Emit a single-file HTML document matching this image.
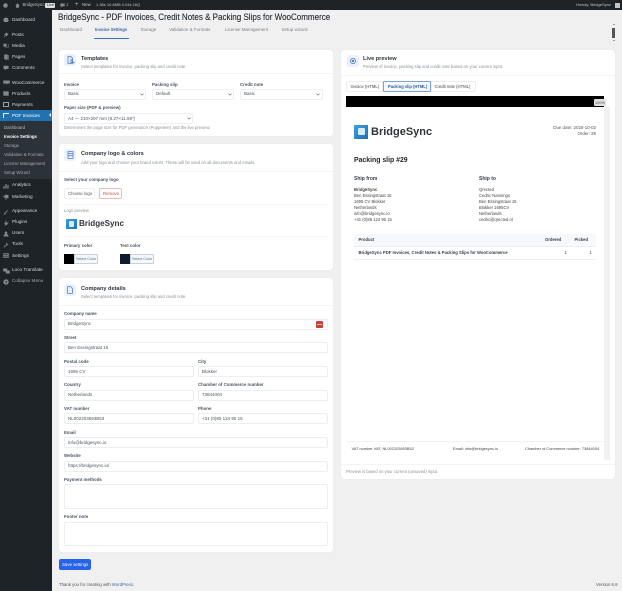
<!DOCTYPE html>
<html><head><meta charset="utf-8"><title>BridgeSync</title>
<style>
html,body{margin:0;padding:0}
body{width:622px;height:591px;overflow:hidden;background:#f0f0f1;position:relative;font-family:"Liberation Sans",sans-serif;color:#1f2937}
#w{position:absolute;left:0;top:0;width:622px;height:591px;filter:blur(.3px)}
.t,.b,svg.i{position:absolute}
.t{white-space:nowrap;line-height:10px;height:10px;font-size:4.6px}
.b{box-sizing:border-box}
.card{position:absolute;background:#fff;border-radius:4px;box-shadow:0 0 2px rgba(0,0,0,.04)}
.ln{position:absolute;height:1px;background:#f3f4f6}
.in{position:absolute;box-sizing:border-box;background:#fff;border:1px solid #eceef1;border-radius:2px}
.ic{position:absolute;width:12px;height:12px;background:#eaf1fb;border-radius:3px}
.l{font-weight:bold;color:#4b5563;font-size:4.4px}
.v{color:#4b5563;font-size:4.5px}
.g{color:#8a929c;font-size:4.2px}
.h{font-weight:bold;color:#2b3440;font-size:5.6px}
.m{color:#d5d8db;font-size:4.7px}
.c{color:#7b8087;font-size:4.5px}
.k{color:#444;font-size:4.2px}
.f{color:#444;font-size:3.9px}
svg.i path,svg.i rect,svg.i circle{fill:#82888d}
svg.o path,svg.o circle{fill:none!important}
</style></head><body><div id="w">

<!-- sidebar -->
<div class="b" style="left:0;top:0;width:52px;height:591px;background:#1d2327"></div>
<div class="b" style="left:0;top:110px;width:52px;height:11px;background:#2271b1"></div>
<div class="b" style="left:0;top:121px;width:52px;height:58px;background:#2c3338"></div>
<div class="b" style="left:49px;top:113px;width:0;height:0;border:2.5px solid transparent;border-right-color:#f0f0f1;border-left:0"></div>

<svg class="i" style="left:3px;top:17px" width="6" height="6" viewBox="0 0 6 6"><path d="M3 .5a2.6 2.6 0 0 1 2.6 2.6c0 .8-.3 1.4-.8 1.9H1.2C.7 4.500.4 3.900.4 3.100A2.600 2.600 0 0 1 3 .5z"/></svg><div class="t m" style="left:12px;top:15px">Dashboard</div>
<svg class="i" style="left:3px;top:32px" width="6" height="6" viewBox="0 0 6 6"><path d="M3.500.5l2 2-1 .5-.8 1.500L1 2.200 2.600 1.400zM1.800 3.500L.5 5.500l2-1.300z"/></svg><div class="t m" style="left:12px;top:29.5px">Posts</div>
<svg class="i" style="left:3px;top:43px" width="6" height="6" viewBox="0 0 6 6"><path d="M.4.8h3.200v2.800H.4zM2 3.900h3.600V1.600h-1v-.4h1.400v3.200H2z"/></svg><div class="t m" style="left:12px;top:40.5px">Media</div>
<svg class="i" style="left:3.500px;top:54px" width="5" height="6" viewBox="0 0 5 6"><path d="M.2.500h3.600v4.800H.2zM4.200 1h.6v4.600H1.200v-.3h3z"/></svg><div class="t m" style="left:12px;top:52px">Pages</div>
<svg class="i" style="left:3px;top:65px" width="6" height="6" viewBox="0 0 6 6"><path d="M.5.800h5v3.200H3.400L2 5.400V4H.5z"/></svg><div class="t m" style="left:12px;top:63px">Comments</div>
<svg class="i" style="left:2.500px;top:80px" width="7" height="5" viewBox="0 0 7 5"><path d="M.2.500h6.600v3H4.500L3.500 4.600 3 3.500H.2z"/></svg><div class="t m" style="left:12px;top:77.500px">WooCommerce</div>
<svg class="i" style="left:3px;top:91px" width="6" height="5" viewBox="0 0 6 5"><rect x=".3" y=".3" width="5.400" height="4.400"/></svg><div class="t m" style="left:12px;top:88.500px">Products</div>
<div class="b" style="left:2.500px;top:102px;width:6.500px;height:5px;border:1px solid #9aa0a5"></div><div class="t m" style="left:12px;top:99.500px">Payments</div>
<div class="b" style="left:3px;top:113px;width:6px;height:5px;border-left:1px solid #e8f1f8;border-top:1px solid #e8f1f8"></div><div class="t" style="left:12px;top:110.500px;color:#fff;font-size:4.700px">PDF Invoices</div>

<div class="t" style="left:4px;top:122.500px;color:#b4b9be;font-size:4.300px">Dashboard</div>
<div class="t" style="left:4px;top:132px;color:#fff;font-size:4.300px;font-weight:bold">Invoice Settings</div>
<div class="t" style="left:4px;top:141px;color:#a7acb1;font-size:4.300px">Storage</div>
<div class="t" style="left:4px;top:150px;color:#a7acb1;font-size:4.300px">Validation &amp; Formats</div>
<div class="t" style="left:4px;top:159px;color:#a7acb1;font-size:4.300px">License Management</div>
<div class="t" style="left:4px;top:168px;color:#a7acb1;font-size:4.300px">Setup Wizard</div>

<svg class="i" style="left:3px;top:182.500px" width="6" height="6" viewBox="0 0 6 6"><path d="M.4 3h1.200v2.600H.4zM2.400 1h1.200v4.600H2.400zM4.400 2h1.200v3.600H4.400z"/></svg><div class="t m" style="left:12px;top:180px">Analytics</div>
<svg class="i" style="left:3px;top:194px" width="6" height="6" viewBox="0 0 6 6"><path d="M2.400.4h1v5.200h-1zM.6 1.800L5.400.8v3.600L.6 3.400z"/></svg><div class="t m" style="left:12px;top:191.500px">Marketing</div>
<svg class="i" style="left:3px;top:208.500px" width="6" height="6" viewBox="0 0 6 6"><path d="M5.500.5L3.400 3.800 2.400 2.800zM2 3.200l.9.900c0 1-.9 1.500-2.400 1.400.7-.4.600-1.800 1.500-2.300z"/></svg><div class="t m" style="left:12px;top:206px">Appearance</div>
<svg class="i" style="left:3px;top:219.500px" width="6" height="6" viewBox="0 0 6 6"><path d="M3.400.5l.6.600L3 2.100l1 1 1-1 .6.600-1 1.200-.6 1-1.200.1-1 1-.4-.4 1-1L1.300 3.400l.9-1.200z"/></svg><div class="t m" style="left:12px;top:217px">Plugins</div>
<svg class="i" style="left:3px;top:230.500px" width="6" height="6" viewBox="0 0 6 6"><circle cx="3" cy="1.800" r="1.300"/><path d="M.5 5.500c0-1.800 1-2.500 2.500-2.500s2.500.7 2.500 2.500z"/></svg><div class="t m" style="left:12px;top:228px">Users</div>
<svg class="i" style="left:3px;top:241.500px" width="6" height="6" viewBox="0 0 6 6"><path d="M4 .4l-1 1 .4 1L.5 5l.6.6L4 3.100l.9.300 .8-1-.9.100-.7-.7.1-.9z"/></svg><div class="t m" style="left:12px;top:239px">Tools</div>
<svg class="i" style="left:3px;top:253px" width="6" height="5" viewBox="0 0 6 5"><path d="M.3.300h5.400v4.400H.3zM1 1.300v.6h4v-.6zM1 2.900v.6h4v-.6z" fill-rule="evenodd"/></svg><div class="t m" style="left:12px;top:250.500px">Settings</div>
<svg class="i" style="left:2.500px;top:267.500px" width="7" height="6" viewBox="0 0 7 6"><path d="M.2.500h4v3h-4zM2.800 2.500h4v3h-4z"/></svg><div class="t m" style="left:12px;top:265px">Loco Translate</div>
<svg class="i" style="left:3px;top:278.500px" width="6" height="6" viewBox="0 0 6 6"><path d="M3 .3a2.700 2.700 0 1 0 0 5.400 2.700 2.700 0 0 0 0-5.400zM3.700 1.800v2.400L2 3z" fill-rule="evenodd"/></svg><div class="t" style="left:12px;top:276px;color:#a0a5aa;font-size:4.700px">Collapse Menu</div>

<!-- admin bar -->
<div class="b" style="left:0;top:0;width:622px;height:10px;background:#1d2327"></div>
<svg class="i" style="left:2.500px;top:2.500px" width="5" height="5" viewBox="0 0 5 5"><circle cx="2.500" cy="2.500" r="2.300"/></svg>
<svg class="i" style="left:15px;top:2.500px" width="5" height="5" viewBox="0 0 5 5"><path d="M2.500.3L4.800 2.500H4v2.300H1V2.500H.2z"/></svg>
<div class="t" style="left:22.500px;top:0;color:#c3c4c7;font-size:4.300px">BridgeSync</div>
<div class="b" style="left:45px;top:2.500px;width:10px;height:5.500px;background:#dcdee0;border-radius:1px"></div>
<div class="t" style="left:47px;top:.2px;color:#1d2327;font-size:3.800px">Live</div>
<svg class="i" style="left:59.500px;top:2.500px" width="5" height="5" viewBox="0 0 5 5"><path d="M.3.500h4.400v2.800H2.600L1.400 4.600V3.300H.3z"/></svg>
<div class="t" style="left:66px;top:0;color:#a7aaad;font-size:4.400px">1</div>
<div class="t" style="left:75px;top:0;color:#c3c4c7;font-size:6px">+</div>
<div class="t" style="left:82px;top:0;color:#c3c4c7;font-size:4.400px">New</div>
<div class="t" style="left:96px;top:0;color:#c3c4c7;font-size:4px">1.38s 10.6MB 0.04s 16Q</div>
<div class="t" style="left:576px;top:0;color:#c3c4c7;font-size:4.050px">Howdy, BridgeSync</div>
<div class="b" style="left:614.500px;top:2.500px;width:5px;height:5px;background:#c3c4c7"></div>

<!-- heading -->
<div class="t" style="left:58px;top:11.500px;font-size:9.200px;color:#23282d;transform:scaleX(.873);transform-origin:0 50%;-webkit-text-stroke:.12px #23282d">BridgeSync - PDF Invoices, Credit Notes &amp; Packing Slips for WooCommerce</div>
<div class="t c" style="left:60px;top:25px">Dashboard</div>
<div class="t" style="left:95px;top:25px;font-size:4.200px;font-weight:bold;color:#3b6aa8">Invoice Settings</div>
<div class="t c" style="left:140.500px;top:25px">Storage</div>
<div class="t c" style="left:169px;top:25px">Validation &amp; Formats</div>
<div class="t c" style="left:225px;top:25px">License Management</div>
<div class="t c" style="left:281.500px;top:25px">Setup wizard</div>
<div class="b" style="left:93.500px;top:38px;width:35px;height:1px;background:#3b74c9"></div>

<div class="b" style="left:612.500px;top:23.500px;width:0;height:0;border:1.200px solid transparent;border-bottom-color:#555;border-top:0"></div>
<div class="b" style="left:612.400px;top:27.500px;width:2.600px;height:10px;background:#555"></div>
<div class="b" style="left:612.500px;top:40px;width:0;height:0;border:1.200px solid transparent;border-top-color:#555;border-bottom:0"></div>

<!-- Templates -->
<div class="card" style="left:59px;top:50px;width:274px;height:86px"></div>
<div class="ic" style="left:64px;top:54px"></div>
<svg class="i o" style="left:66.500px;top:56px" width="8" height="8" viewBox="0 0 8 8"><path d="M1 .7h3l1.600 1.600v5H1z M4 3.500l3 3.200H4z" stroke="#4f7fc4" stroke-width=".8"/></svg>
<div class="t h" style="left:81px;top:54px">Templates</div>
<div class="t g" style="left:81px;top:62px">Select templates for invoice, packing slip and credit note</div>
<div class="ln" style="left:59px;top:73px;width:274px"></div>
<div class="t l" style="left:64px;top:79.500px">Invoice</div>
<div class="t l" style="left:152px;top:79.500px">Packing slip</div>
<div class="t l" style="left:240px;top:79.500px">Credit note</div>
<div class="in" style="left:64px;top:89px;width:82px;height:10.500px"></div><div class="t v" style="left:68px;top:89.300px">Basic</div>
<div class="in" style="left:152px;top:89px;width:82px;height:10.500px"></div><div class="t v" style="left:156px;top:89.300px">Default</div>
<div class="in" style="left:240px;top:89px;width:82.500px;height:10.500px"></div><div class="t v" style="left:244px;top:89.300px">Basic</div>
<div class="t l" style="left:64px;top:103px">Paper size (PDF &amp; preview)</div>
<div class="in" style="left:64px;top:113px;width:129px;height:11px"></div><div class="t v" style="left:68px;top:113.500px">A4 — 210×297 mm (8.27×11.69″)</div>
<svg class="i o" style="left:139.500px;top:93px" width="4" height="3" viewBox="0 0 4 3"><path d="M.5.600L2 2.200 3.500.600" stroke="#666" stroke-width=".6"/></svg>
<svg class="i o" style="left:227.500px;top:93px" width="4" height="3" viewBox="0 0 4 3"><path d="M.5.600L2 2.200 3.500.600" stroke="#666" stroke-width=".6"/></svg>
<svg class="i o" style="left:315.500px;top:93px" width="4" height="3" viewBox="0 0 4 3"><path d="M.5.600L2 2.200 3.500.600" stroke="#666" stroke-width=".6"/></svg>
<svg class="i o" style="left:186.500px;top:117px" width="4" height="3" viewBox="0 0 4 3"><path d="M.5.600L2 2.200 3.500.600" stroke="#666" stroke-width=".6"/></svg>
<div class="t g" style="left:64px;top:123px">Determines the page size for PDF generation (Puppeteer) and the live preview.</div>

<!-- Logos -->
<div class="card" style="left:59px;top:144px;width:274px;height:126px"></div>
<div class="ic" style="left:64px;top:149px"></div>
<svg class="i o" style="left:66.500px;top:151px" width="7" height="8" viewBox="0 0 7 8"><path d="M1 .6h5v6.800H1z M1 2.500h5M1 4.500h5" stroke="#4f7fc4" stroke-width=".8"/></svg>
<div class="t h" style="left:81px;top:149px">Company logo &amp; colors</div>
<div class="t g" style="left:81px;top:157.500px">Add your logo and choose your brand colors. These will be used on all documents and emails.</div>
<div class="ln" style="left:59px;top:171px;width:274px"></div>
<div class="t l" style="left:64px;top:175px">Select your company logo</div>
<div class="b" style="left:64px;top:188px;width:31px;height:11px;border:1px solid #eceef1;border-radius:2px;background:#fff"></div><div class="t" style="left:68px;top:188.500px;font-size:4.300px;color:#555">Choose logo</div>
<div class="b" style="left:99px;top:188px;width:22.500px;height:11px;border:1px solid #efb9b9;border-radius:2px;background:#fff"></div><div class="t" style="left:103px;top:188.500px;font-size:4.300px;color:#c0504d">Remove</div>
<div class="ln" style="left:64px;top:204px;width:264px"></div>
<div class="t g" style="left:64px;top:205.500px">Logo preview</div>
<div class="b" style="left:66px;top:218.500px;width:10.500px;height:10.500px;background:linear-gradient(135deg,#3aa0e0,#1f6fb5)"></div>
<div class="b" style="left:68.500px;top:221px;width:5.500px;height:5.500px;background:#d5ebf9;border-radius:1px"></div>
<div class="t" style="left:79px;top:219px;font-size:8.100px;font-weight:bold;color:#30343a">BridgeSync</div>
<div class="ln" style="left:64px;top:236px;width:264px"></div>
<div class="t l" style="left:64px;top:240.500px">Primary color</div>
<div class="t l" style="left:120px;top:240.500px">Text color</div>
<div class="b" style="left:64px;top:254px;width:10px;height:9.500px;background:#000"></div>
<div class="b" style="left:74px;top:254px;width:23.500px;height:9.500px;background:#f6f7f7;border:1px solid #c3d2de;border-radius:0 1px 1px 0"></div>
<div class="t" style="left:76px;top:254px;font-size:3.700px;color:#4f7394">Select Color</div>
<div class="b" style="left:120px;top:254px;width:10px;height:9.500px;background:#0f1b2d"></div>
<div class="b" style="left:130px;top:254px;width:23.500px;height:9.500px;background:#f6f7f7;border:1px solid #c3d2de;border-radius:0 1px 1px 0"></div>
<div class="t" style="left:132px;top:254px;font-size:3.700px;color:#4f7394">Select Color</div>

<!-- Company details -->
<div class="card" style="left:59px;top:278px;width:274px;height:273.500px"></div>
<div class="ic" style="left:64px;top:284px"></div>
<svg class="i o" style="left:67px;top:286px" width="6" height="8" viewBox="0 0 6 8"><path d="M.6.600h3l1.800 1.800v5H.6z" stroke="#4f7fc4" stroke-width=".8"/></svg>
<div class="t h" style="left:81px;top:284px">Company details</div>
<div class="t g" style="left:81px;top:292px">Select templates for invoice, packing slip and credit note.</div>
<div class="ln" style="left:59px;top:305px;width:274px"></div>

<div class="t l" style="left:64px;top:309px">Company name</div>
<div class="in" style="left:64px;top:318.500px;width:264px;height:11px"></div><div class="t v" style="left:68px;top:319px">BridgeSync</div>
<div class="b" style="left:315.500px;top:320.500px;width:7px;height:7px;background:#c9403c;border-radius:1px"></div>
<div class="b" style="left:316.500px;top:323.500px;width:5px;height:1px;background:#eebcba"></div>
<div class="t l" style="left:64px;top:332.500px">Street</div>
<div class="in" style="left:64px;top:342px;width:264px;height:11px"></div><div class="t v" style="left:68px;top:342.500px">Ben Essingstraat 15</div>
<div class="t l" style="left:64px;top:356.500px">Postal code</div><div class="t l" style="left:198px;top:356.500px">City</div>
<div class="in" style="left:64px;top:366px;width:129.500px;height:11px"></div><div class="t v" style="left:68px;top:366.500px">1695 CV</div>
<div class="in" style="left:198px;top:366px;width:130px;height:11px"></div><div class="t v" style="left:202px;top:366.500px">Blokker</div>
<div class="t l" style="left:64px;top:380px">Country</div><div class="t l" style="left:198px;top:380px">Chamber of Commerce number</div>
<div class="in" style="left:64px;top:389.500px;width:129.500px;height:11px"></div><div class="t v" style="left:68px;top:390px">Netherlands</div>
<div class="in" style="left:198px;top:389.500px;width:130px;height:11px"></div><div class="t v" style="left:202px;top:390px">73844004</div>
<div class="t l" style="left:64px;top:404px">VAT number</div><div class="t l" style="left:198px;top:404px">Phone</div>
<div class="in" style="left:64px;top:413px;width:129.500px;height:11px"></div><div class="t v" style="left:68px;top:413.500px">NL002203693B53</div>
<div class="in" style="left:198px;top:413px;width:130px;height:11px"></div><div class="t v" style="left:202px;top:413.500px">+31 (0)85 124 95 15</div>
<div class="t l" style="left:64px;top:427.500px">Email</div>
<div class="in" style="left:64px;top:437px;width:264px;height:11px"></div><div class="t v" style="left:68px;top:437.500px">info@bridgesync.io</div>
<div class="t l" style="left:64px;top:451px">Website</div>
<div class="in" style="left:64px;top:460.500px;width:264px;height:11px"></div><div class="t v" style="left:68px;top:461px">https://bridgesync.io/</div>
<div class="t l" style="left:64px;top:475px">Payment methods</div>
<div class="in" style="left:64px;top:484px;width:264px;height:25px"></div>
<div class="t l" style="left:64px;top:512px">Footer note</div>
<div class="in" style="left:64px;top:521.500px;width:264px;height:24.500px"></div>

<div class="b" style="left:58.500px;top:559px;width:32px;height:11px;background:#2563eb;border-radius:2px"></div>
<div class="t" style="left:62px;top:559.500px;color:#fff;font-size:4.400px">Save settings</div>
<div class="t" style="left:59px;top:580px;font-size:4.300px;color:#50575e">Thank you for creating with <span style="color:#3b6aa8">WordPress</span>.</div>
<div class="t" style="left:596px;top:579.500px;font-size:4.300px;color:#50575e">Version 6.9</div>

<!-- Live preview -->
<div class="card" style="left:341px;top:50px;width:274px;height:429px"></div>
<div class="ic" style="left:347px;top:54.500px"></div>
<svg class="i" style="left:349px;top:56.500px" width="8" height="8" viewBox="0 0 8 8"><path d="M4 1a3 3 0 1 0 0 6 3 3 0 0 0 0-6zm0 .8a2.200 2.200 0 1 1 0 4.400 2.200 2.200 0 0 1 0-4.400z" style="fill:#4f7fc4" fill-rule="evenodd"/><circle cx="4" cy="4" r="1.200" style="fill:#4f7fc4"/></svg>
<div class="t h" style="left:363px;top:54px">Live preview</div>
<div class="t g" style="left:363px;top:62px">Preview of invoice, packing slip and credit note based on your current input.</div>
<div class="ln" style="left:341px;top:75px;width:274px"></div>

<div class="b" style="left:346px;top:81px;width:36.500px;height:11px;background:#fff;border:1px solid #eceef1;border-radius:2px 0 0 2px"></div>
<div class="t" style="left:350.500px;top:81.500px;font-size:4.200px;color:#444">Invoice (HTML)</div>
<div class="b" style="left:383px;top:81px;width:47.500px;height:11px;background:#f4f8fd;border:1px solid #7fa3d2;border-radius:1px"></div>
<div class="t" style="left:388px;top:81.500px;font-size:4.100px;color:#2e5f9e;font-weight:bold">Packing slip (HTML)</div>
<div class="b" style="left:431px;top:81px;width:45px;height:11px;background:#fff;border:1px solid #eceef1;border-radius:0 2px 2px 0"></div>
<div class="t" style="left:434.500px;top:81.500px;font-size:4.200px;color:#444">Credit note (HTML)</div>

<div class="b" style="left:346px;top:96px;width:258px;height:11px;background:#000"></div>
<div class="b" style="left:593.500px;top:99px;width:12px;height:7px;background:#dfe0e1;border-radius:1px"></div>
<div class="t" style="left:595px;top:97.500px;font-size:3.800px;color:#555">100%</div>
<div class="b" style="left:603.500px;top:106px;width:6.500px;height:354px;background:#f1f1f2"></div>

<div class="b" style="left:354px;top:124.500px;width:14px;height:14px;background:linear-gradient(135deg,#3aa0e0,#1f6fb5)"></div>
<div class="b" style="left:357.500px;top:128px;width:7px;height:7px;background:#d5ebf9;border-radius:1px"></div>
<div class="t" style="left:371px;top:127px;font-size:11px;font-weight:bold;color:#30343a">BridgeSync</div>
<div class="t k" style="right:26px;top:123px;font-size:4.400px;color:#555">Due date: 2025-10-02</div>
<div class="t k" style="right:26px;top:129px;font-size:4.400px;color:#555">Order: 29</div>
<div class="t" style="left:354px;top:155.500px;font-size:6.900px;font-weight:bold;color:#23282d">Packing slip #29</div>
<div class="t" style="left:354px;top:174px;font-size:5px;font-weight:bold;color:#3a424c">Ship from</div>
<div class="t" style="left:479px;top:174px;font-size:5px;font-weight:bold;color:#3a424c">Ship to</div>
<div class="t k" style="left:354px;top:185px;font-weight:bold">BridgeSync</div>
<div class="t k" style="left:354px;top:191px">Ben Essingstraat 15</div>
<div class="t k" style="left:354px;top:197px">1695 CV Blokker</div>
<div class="t k" style="left:354px;top:203px">Netherlands</div>
<div class="t k" style="left:354px;top:209px">info@bridgesync.io</div>
<div class="t k" style="left:354px;top:215px">+31 (0)85 124 95 15</div>
<div class="t k" style="left:479px;top:185px">Qrected</div>
<div class="t k" style="left:479px;top:191px">Cedric Nannings</div>
<div class="t k" style="left:479px;top:197px">Ben Essingstraat 15</div>
<div class="t k" style="left:479px;top:203px">Blokker 1695CV</div>
<div class="t k" style="left:479px;top:209px">Netherlands</div>
<div class="t k" style="left:479px;top:215px">cedric@qrected.nl</div>

<div class="b" style="left:354px;top:234px;width:242px;height:12.500px;background:#f6f8fb;border-bottom:1px solid #eceef1"></div>
<div class="b" style="left:354px;top:259px;width:242px;height:1px;background:#eceef1"></div>
<div class="t" style="left:358.500px;top:235px;font-size:4.200px;font-weight:bold;color:#3a424c">Product</div>
<div class="t" style="left:545px;top:235px;font-size:4.200px;font-weight:bold;color:#3a424c">Ordered</div>
<div class="t" style="left:574.500px;top:235px;font-size:4.200px;font-weight:bold;color:#3a424c">Picked</div>
<div class="t" style="left:358.500px;top:248px;font-size:4.200px;font-weight:bold;color:#3a424c">BridgeSync PDF Invoices, Credit Notes &amp; Packing Slips for WooCommerce</div>
<div class="t k" style="left:564.500px;top:248px">1</div>
<div class="t k" style="left:589.500px;top:248px">1</div>

<div class="b" style="left:346px;top:441px;width:257px;height:1px;background:#f0f1f3"></div>
<div class="t f" style="left:351.500px;top:444px">VAT number VAT: NL002203693B52</div>
<div class="t f" style="left:453px;top:444px">Email: info@bridgesync.io</div>
<div class="t f" style="left:525px;top:444px">Chamber of Commerce number: 73844004</div>
<div class="ln" style="left:341px;top:464px;width:274px"></div>
<div class="t g" style="left:346px;top:467px">Preview is based on your current (unsaved) input.</div>
</div></body></html>
